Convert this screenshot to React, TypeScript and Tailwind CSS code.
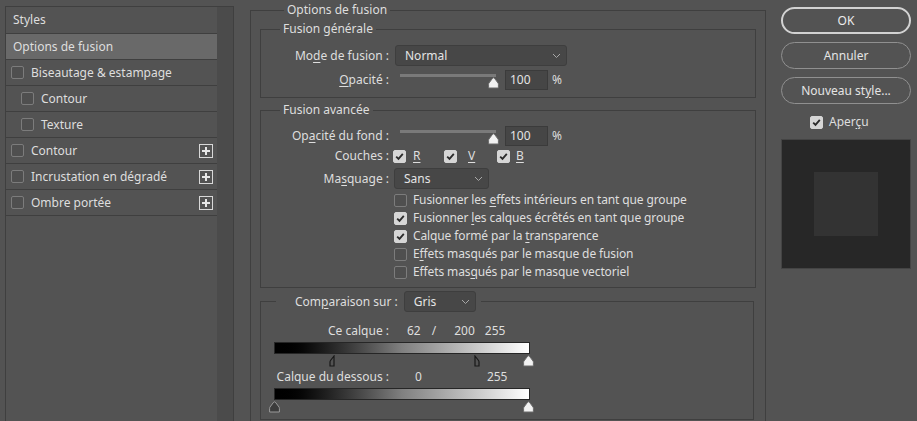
import React from 'react'

// Layer style dialog: effect list, blending options, dialog buttons + preview swatch

function Check({ on = false }: { on?: boolean }) {
  return (
    <span
      className={
        'inline-flex h-[13px] w-[13px] shrink-0 items-center justify-center rounded-[2px] border ' +
        (on ? 'border-[#d6d6d6] bg-[#d6d6d6]' : 'border-[#7c7c7c] bg-[#4f4f4f]')
      }
    >
      {on && (
        <svg width="9" height="9" viewBox="0 0 9 9">
          <path d="M1.2 4.6 L3.5 6.9 L7.8 1.8" fill="none" stroke="#2b2b2b" strokeWidth="1.8" />
        </svg>
      )}
    </span>
  )
}

function PlusBox() {
  return (
    <span className="flex h-[14px] w-[14px] items-center justify-center border border-[#d8d8d8]">
      <svg width="10" height="10" viewBox="0 0 10 10">
        <path d="M5 1 V9 M1 5 H9" stroke="#e6e6e6" strokeWidth="2" />
      </svg>
    </span>
  )
}

function Chevron() {
  return (
    <svg width="9" height="6" viewBox="0 0 9 6" className="shrink-0">
      <path d="M1 1 L4.5 4.5 L8 1" fill="none" stroke="#a8a8a8" strokeWidth="1" />
    </svg>
  )
}

function Select({ value, width }: { value: string; width: string }) {
  return (
    <div
      className={
        'flex h-[21px] items-center justify-between rounded-[3px] border border-[#3e3e3e] bg-[#474747] pl-[9px] pr-[5px] text-[#e4e4e4] ' +
        width
      }
    >
      <span>{value}</span>
      <Chevron />
    </div>
  )
}

type Thumb = 'white' | 'dark' | 'left' | 'right'

function ThumbIcon({ kind }: { kind: Thumb }) {
  if (kind === 'left')
    return (
      <svg width="11" height="12" viewBox="0 0 11 12">
        <path d="M6 1 L2.5 5.5 Q2 6.2 2 7 V11 H6 Z" fill="#535353" stroke="#181818" strokeWidth="1.2" />
      </svg>
    )
  if (kind === 'right')
    return (
      <svg width="11" height="12" viewBox="0 0 11 12">
        <path d="M5 1 L8.5 5.5 Q9 6.2 9 7 V11 H5 Z" fill="#535353" stroke="#181818" strokeWidth="1.2" />
      </svg>
    )
  return (
    <svg width="11" height="12" viewBox="0 0 11 12">
      <path
        d="M5.5 0.8 Q6.2 0.8 7 2 L10 6 Q10.4 6.6 10.4 7.4 V11 H0.6 V7.4 Q0.6 6.6 1 6 L4 2 Q4.8 0.8 5.5 0.8 Z"
        fill={kind === 'white' ? '#f2f2f2' : '#3c3c3c'}
        stroke={kind === 'white' ? '#6a6a6a' : '#9a9a9a'}
        strokeWidth="1"
      />
    </svg>
  )
}

function Slider() {
  return (
    <div className="relative ml-[11px] h-[20px] w-[101px]">
      <div className="absolute left-0 top-[4px] h-[3px] w-[96px] bg-[#7a7a7a]" />
      <div className="absolute left-[88px] top-[7px]">
        <ThumbIcon kind="white" />
      </div>
    </div>
  )
}

function NumberField({ value }: { value: string }) {
  return (
    <div className="ml-[4px] flex h-[20px] w-[43px] items-center border border-[#3b3b3b] bg-[#464646] pl-[4px] text-[#e4e4e4]">
      {value}
    </div>
  )
}

function U({ children }: { children: React.ReactNode }) {
  return <span className="underline underline-offset-2">{children}</span>
}

// bordered group with its caption sitting on the top edge
function Group({
  title,
  className,
  titleClass = 'left-[19px] -top-[9px] px-[3px]',
  children,
}: {
  title: React.ReactNode
  className: string
  titleClass?: string
  children: React.ReactNode
}) {
  return (
    <div className={'relative border border-[#3f3f3f] ' + className}>
      <div className={'absolute flex items-center bg-[#535353] ' + titleClass}>{title}</div>
      {children}
    </div>
  )
}

function GradientBar({ thumbs }: { thumbs: { x: number; kind: Thumb }[] }) {
  return (
    <div className="ml-[13px] w-[256px]">
      <div className="h-[12px] border border-[#262626] bg-gradient-to-r from-black via-[#808080] to-white" />
      <div className="relative h-[12px]">
        {thumbs.map((t, i) => (
          <div key={i} className="absolute top-[1px]" style={{ left: t.x - 5 }}>
            <ThumbIcon kind={t.kind} />
          </div>
        ))}
      </div>
    </div>
  )
}

const effects = [
  { label: 'Biseautage & estampage', indent: false, plus: false },
  { label: 'Contour', indent: true, plus: false },
  { label: 'Texture', indent: true, plus: false },
  { label: 'Contour', indent: false, plus: true },
  { label: 'Incrustation en dégradé', indent: false, plus: true },
  { label: 'Ombre portée', indent: false, plus: true },
]

const advancedChecks: { on: boolean; text: React.ReactNode }[] = [
  { on: false, text: <>Fusionner les <U>e</U>ffets intérieurs en tant que groupe</> },
  { on: true, text: <>Fusionner <U>l</U>es calques écrêtés en tant que groupe</> },
  { on: true, text: <>Calque formé par la <U>t</U>ransparence</> },
  { on: false, text: <>E<U>f</U>fets masqués par le masque de fusion</> },
  { on: false, text: <>Effets mas<U>q</U>ués par le masque vectoriel</> },
]

export default function App() {
  return (
    <div className="flex h-[421px] w-[917px] overflow-hidden bg-[#535353] font-['Noto_Sans','DejaVu_Sans',sans-serif] text-[12px] leading-[16px] text-[#dedede]">
      {/* effect list */}
      <div className="ml-[5px] mt-[6px] flex h-[430px] w-[229px] shrink-0 border border-[#3f3f3f]">
        <div className="w-[211px]">
          <div className="flex h-[27px] items-center border-b border-[#3f3f3f] pl-[7px]">Styles</div>
          <div className="flex h-[26px] items-center border-b border-[#3f3f3f] bg-[#696969] pl-[7px]">
            Options de fusion
          </div>
          {effects.map((e, i) => (
            <div
              key={i}
              className={
                'flex h-[26px] items-center border-b border-[#3f3f3f] pr-[4px] ' + (e.indent ? 'pl-[15px]' : 'pl-[5px]')
              }
            >
              <Check />
              <span className="ml-[7px] flex-1">{e.label}</span>
              {e.plus && <PlusBox />}
            </div>
          ))}
        </div>
        <div className="w-[16px] bg-[#4b4b4b]" />
      </div>

      {/* blending options */}
      <Group
        title="Options de fusion"
        titleClass="left-[33px] -top-[9px] px-[3px]"
        className="ml-[16px] mt-[10px] h-[440px] w-[516px] shrink-0 px-[9px]"
      >
        <Group title="Fusion générale" className="mt-[18px] pb-[7px] pt-[15px]">
          <div className="flex items-center">
            <span className="w-[128px] text-right">
              Mo<U>d</U>e de fusion :
            </span>
            <div className="ml-[6px]">
              <Select value="Normal" width="w-[172px]" />
            </div>
          </div>
          <div className="mt-[4px] flex items-center">
            <span className="w-[128px] text-right">
              <U>O</U>pacité :
            </span>
            <Slider />
            <NumberField value="100" />
            <span className="ml-[4px]">%</span>
          </div>
        </Group>

        <Group title="Fusion avancée" className="mt-[12px] pb-[6px] pt-[15px]">
          <div className="flex items-center">
            <span className="w-[128px] text-right">
              Op<U>a</U>cité du fond :
            </span>
            <Slider />
            <NumberField value="100" />
            <span className="ml-[4px]">%</span>
          </div>
          <div className="mt-[2px] flex h-[16px] items-center">
            <span className="w-[128px] text-right">Couches :</span>
            <span className="ml-[4px] flex items-center">
              <Check on />
              <span className="ml-[7px] w-[31px]">
                <U>R</U>
              </span>
              <Check on />
              <span className="ml-[11px] w-[29px]">
                <U>V</U>
              </span>
              <Check on />
              <span className="ml-[6px]">
                <U>B</U>
              </span>
            </span>
          </div>
          <div className="mt-[4px] flex items-center">
            <span className="w-[128px] text-right">
              Ma<U>s</U>quage :
            </span>
            <div className="ml-[5px]">
              <Select value="Sans" width="w-[95px]" />
            </div>
          </div>
          <div className="mt-[2px] flex flex-col pl-[133px] tracking-[-0.12px]">
            {advancedChecks.map((c, i) => (
              <div key={i} className="flex h-[18px] items-center">
                <Check on={c.on} />
                <span className="ml-[6px]">{c.text}</span>
              </div>
            ))}
          </div>
        </Group>

        <Group
          title={
            <>
              <span>
                Com<U>p</U>araison sur :
              </span>
              <div className="ml-[6px]">
                <Select value="Gris" width="w-[72px]" />
              </div>
            </>
          }
          titleClass="left-[15px] -top-[11px] pl-[19px] pr-[5px]"
          className="mr-[2px] mt-[13px] h-[119px] pt-[21px]"
        >
          <div className="flex h-[16px] items-center">
            <span className="w-[128px] text-right">Ce calque :</span>
            <span className="ml-[18px]">62</span>
            <span className="ml-[11px]">/</span>
            <span className="ml-[18px]">200</span>
            <span className="ml-[10px]">255</span>
          </div>
          <div className="mt-[3px]">
            <GradientBar
              thumbs={[
                { x: 59, kind: 'left' },
                { x: 201, kind: 'right' },
                { x: 254, kind: 'white' },
              ]}
            />
          </div>
          <div className="mt-[3px] flex h-[16px] items-center">
            <span className="w-[128px] text-right">Calque du dessous :</span>
            <span className="ml-[26px]">0</span>
            <span className="ml-[65px]">255</span>
          </div>
          <div className="mt-[3px]">
            <GradientBar
              thumbs={[
                { x: 0, kind: 'dark' },
                { x: 254, kind: 'white' },
              ]}
            />
          </div>
        </Group>
      </Group>

      {/* buttons + preview */}
      <div className="ml-[15px] mt-[7px] flex w-[130px] shrink-0 flex-col items-center">
        <button className="h-[27px] w-full rounded-full border-2 border-[#d2d2d2] text-[#ececec]">OK</button>
        <button className="mt-[8px] h-[27px] w-full rounded-full border border-[#909090] text-[#e4e4e4]">
          Annuler
        </button>
        <button className="mt-[8px] h-[27px] w-full rounded-full border border-[#909090] text-[#e4e4e4]">
          Nouveau st<U>y</U>le...
        </button>
        <div className="mt-[10px] flex items-center self-start pl-[29px]">
          <Check on />
          <span className="ml-[6px]">
            Aper<U>ç</U>u
          </span>
        </div>
        <div className="mt-[9px] flex h-[130px] w-[130px] items-center justify-center border border-[#444444] bg-[#272727]">
          <div className="h-[64px] w-[64px] bg-[#333333]" />
        </div>
      </div>
    </div>
  )
}
